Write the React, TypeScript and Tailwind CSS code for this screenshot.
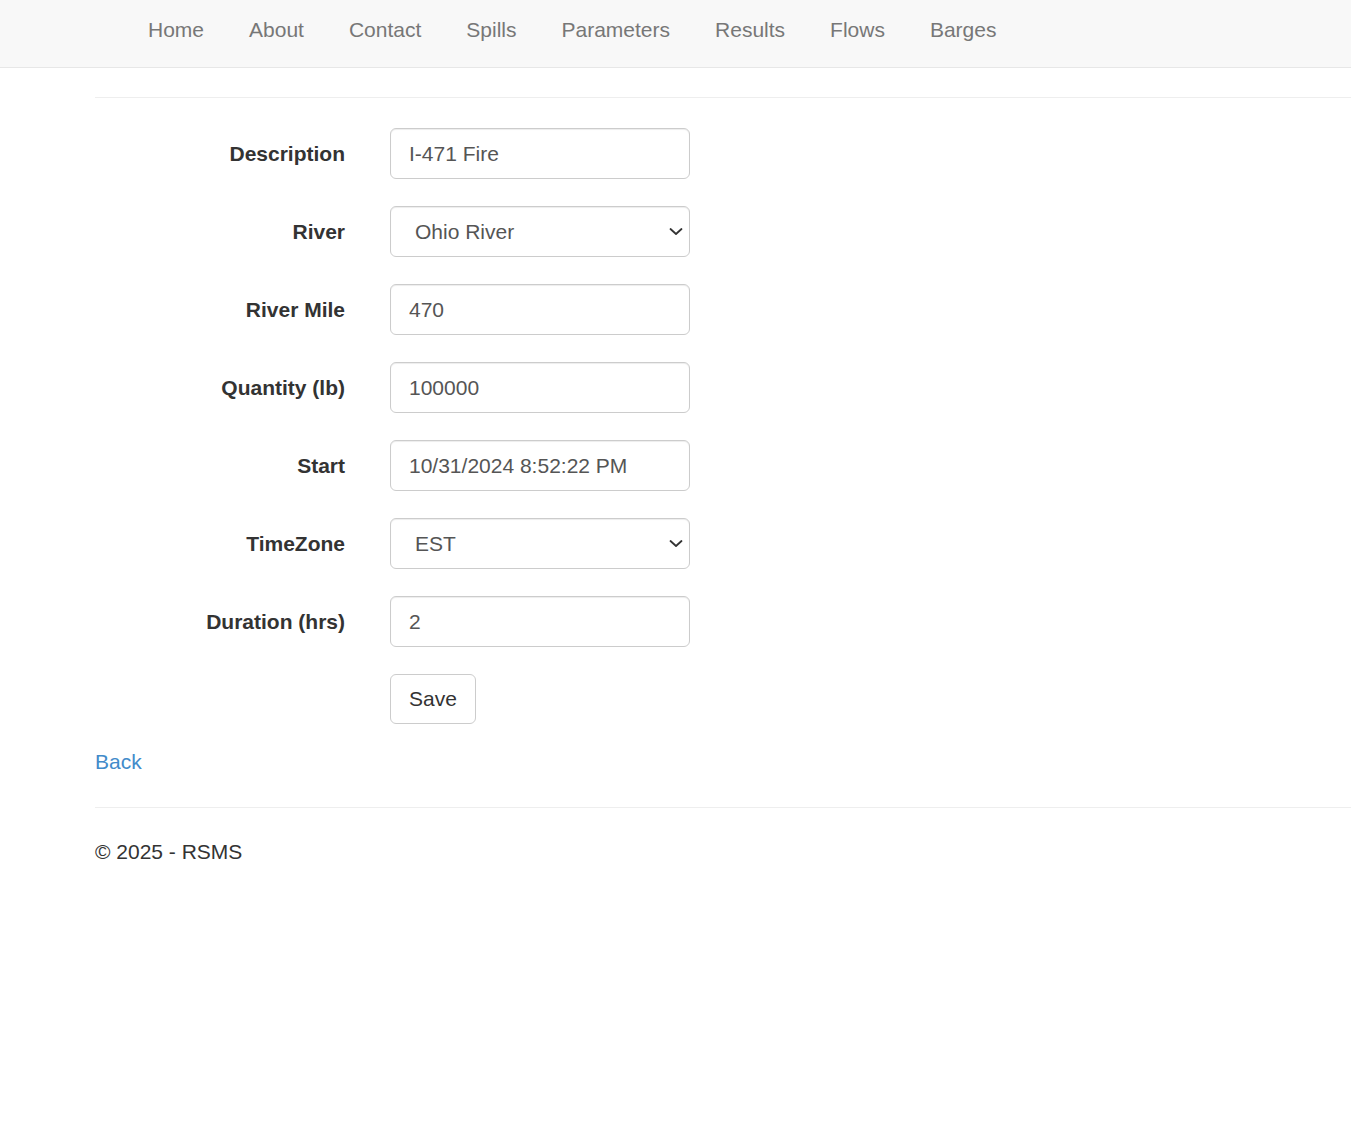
import React from "react";

const navLinks = ["Home", "About", "Contact", "Spills", "Parameters", "Results", "Flows", "Barges"];

type Field = { label: string; value: string; select?: boolean };

const fields: Field[] = [
    { label: "Description", value: "I-471 Fire" },
    { label: "River", value: "Ohio River", select: true },
    { label: "River Mile", value: "470" },
    { label: "Quantity (lb)", value: "100000" },
    { label: "Start", value: "10/31/2024 8:52:22 PM" },
    { label: "TimeZone", value: "EST", select: true },
    { label: "Duration (hrs)", value: "2" },
];

function Chevron() {
    return (
        <svg className="pointer-events-none absolute right-[7px] top-[21px]" width="14" height="9" viewBox="0 0 14 9" fill="none">
            <path d="M1.5 2 L7 7 L12.5 2" stroke="#333" strokeWidth="1.8" strokeLinecap="round" strokeLinejoin="round" />
        </svg>
    );
}

export default function App() {
    return (
        <div className="min-h-[1144px] bg-white font-['Liberation_Sans',Arial,sans-serif] text-[21px] leading-[30px] text-[#333]">
            {/* navbar */}
            <nav className="h-[68px] border-b border-[#e7e7e7] bg-[#f8f8f8]">
                <ul className="flex pl-[125.5px] pt-[15px]">
                    {navLinks.map((link) => (
                        <li key={link}>
                            <a href="#" className="block px-[22.5px] text-[#777]">{link}</a>
                        </li>
                    ))}
                </ul>
            </nav>

            <div className="ml-[95px]">
                <hr className="mt-[29px] border-t border-[#eee]" />

                <form className="mt-[30px] flex flex-col gap-[27px]" onSubmit={(e) => e.preventDefault()}>
                    {fields.map((f) => (
                        <div key={f.label} className="flex items-center">
                            <label className="w-[250px] text-right font-bold text-[#333]">{f.label}</label>
                            <div className="relative ml-[45px] w-[300px]">
                                {f.select ? (
                                    <>
                                        <select
                                            defaultValue={f.value}
                                            className="h-[51px] w-full appearance-none rounded-[6px] border border-[#ccc] bg-white pl-[24px] text-[#555] shadow-[inset_0_1px_1px_rgba(0,0,0,0.075)] outline-none"
                                        >
                                            <option>{f.value}</option>
                                        </select>
                                        <Chevron />
                                    </>
                                ) : (
                                    <input
                                        defaultValue={f.value}
                                        className="h-[51px] w-full rounded-[6px] border border-[#ccc] bg-white px-[18px] text-[#555] shadow-[inset_0_1px_1px_rgba(0,0,0,0.075)] outline-none"
                                    />
                                )}
                            </div>
                        </div>
                    ))}
                    <div className="flex">
                        <div className="ml-[295px]">
                            <button type="submit" className="h-[50px] rounded-[6px] border border-[#ccc] bg-white px-[18px] text-[#333]">Save</button>
                        </div>
                    </div>
                </form>

                <div className="mt-[23px]">
                    <a href="#" className="text-[#428bca]">Back</a>
                </div>

                <hr className="mt-[30px] border-t border-[#eee]" />
                <footer className="mt-[29px]">
                    <p>© 2025 - RSMS</p>
                </footer>
            </div>
        </div>
    );
}
